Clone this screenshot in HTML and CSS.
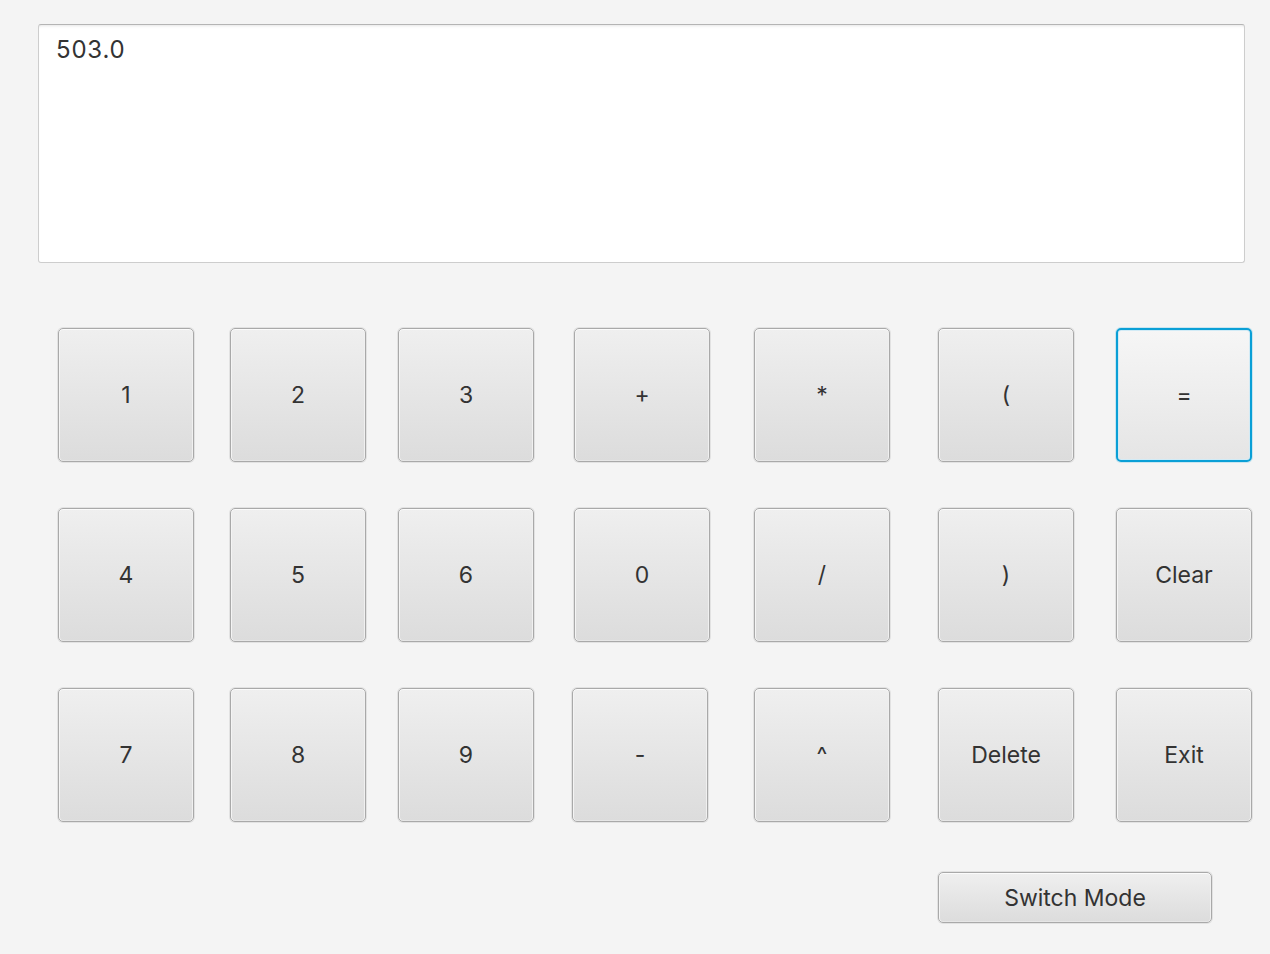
FILE: index.html
```html
<!DOCTYPE html>
<html lang="en">
<head>
<meta charset="utf-8">
<title>Calculator</title>
<link rel="stylesheet" href="styles.css">
</head>
<body>
<div class="app">
  <div class="display">503.0</div>
  <div class="keys">
    <button class="btn">1</button>
    <button class="btn">2</button>
    <button class="btn">3</button>
    <button class="btn">+</button>
    <button class="btn">*</button>
    <button class="btn">(</button>
    <button class="btn focused">=</button>

    <button class="btn">4</button>
    <button class="btn">5</button>
    <button class="btn">6</button>
    <button class="btn">0</button>
    <button class="btn">/</button>
    <button class="btn">)</button>
    <button class="btn">Clear</button>

    <button class="btn">7</button>
    <button class="btn">8</button>
    <button class="btn">9</button>
    <button class="btn shift">-</button>
    <button class="btn">^</button>
    <button class="btn">Delete</button>
    <button class="btn">Exit</button>

    <button class="btn switch">Switch Mode</button>
  </div>
</div>
</body>
</html>
```
FILE: styles.css
```css
html, body {
  margin: 0;
  padding: 0;
  background: #f4f4f4;
  height: 100%;
  overflow: hidden;
}

.app {
  font-family: Inter, "Liberation Sans", Arial, sans-serif;
  color: #333333;
  padding: 24px 25px 0 38px;
}

.display {
  box-sizing: border-box;
  width: 1207px;
  height: 239px;
  background: #ffffff;
  border: 1px solid #cdcdcd;
  border-top-color: #b4b4b4;
  border-radius: 3px;
  box-shadow: inset 0 3px 3px -2px rgba(0, 0, 0, 0.10);
  padding: 11px 17px;
  font-size: 24px;
  letter-spacing: 0.8px;
  line-height: 28px;
}

.keys {
  display: grid;
  grid-template-columns: 172px 168px 176px 180px 184px 178px 136px;
  grid-auto-rows: auto;
  row-gap: 46px;
  margin: 65px 0 0 20px;
}

.btn {
  box-sizing: border-box;
  width: 136px;
  height: 134px;
  margin: 0;
  padding: 0;
  font-family: Inter, "Liberation Sans", Arial, sans-serif;
  font-size: 23px;
  color: #333333;
  border: 1px solid #a9a9a9;
  border-radius: 5px;
  background: linear-gradient(#efefef, #dcdcdc);
  box-shadow:
    inset 0 1px 0 #fbfbfb,
    inset 1px 0 0 #f4f4f4,
    inset -1px 0 0 #f0f0f0,
    inset 0 -1px 0 #e6e6e6,
    0 0 0 1px rgba(0, 0, 0, 0.07);
  cursor: default;
}

.btn.shift {
  margin-left: -2px;
}

.btn.focused {
  border: 2px solid #0a9fd6;
  border-radius: 5px;
  background: linear-gradient(#f6f6f6, #e5e5e5);
  box-shadow:
    inset 0 0 0 1px #d2ebf6,
    0 0 0 1px rgba(10, 159, 214, 0.18);
}

.btn.switch {
  grid-column: 6 / span 2;
  width: 274px;
  height: 51px;
  margin-top: 4px;
}
```
